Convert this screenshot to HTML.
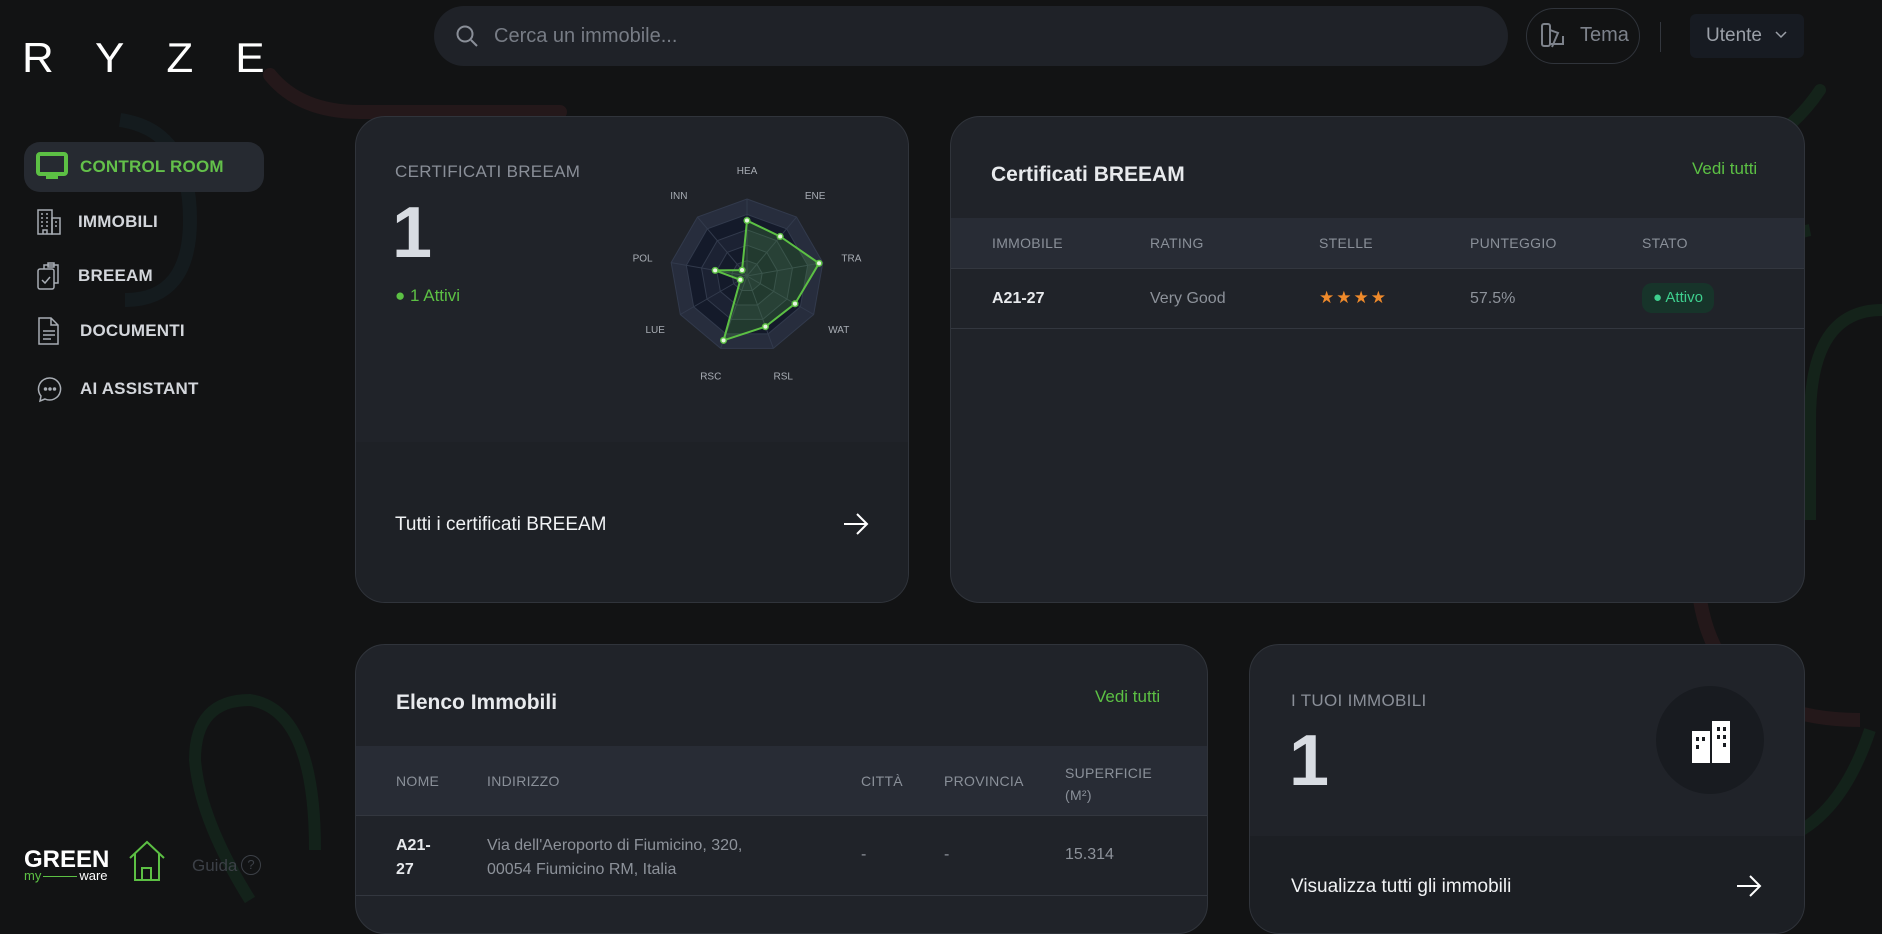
<!DOCTYPE html>
<html><head><meta charset="utf-8"><style>
*{box-sizing:border-box;margin:0;padding:0}
body{width:1882px;height:912px;overflow:hidden;background:#121314;font-family:"Liberation Sans",sans-serif;color:#e6e8eb;position:relative}
.abs{position:absolute}
.card{position:absolute;background:#202329;border:1px solid #30343b;border-radius:30px;overflow:hidden}
.nav{position:absolute;left:24px;width:240px;height:50px;display:flex;align-items:center;font-size:17px;font-weight:bold;color:#d3d6db;letter-spacing:.2px}
.nav svg{position:absolute;left:12px}
.nav span{position:absolute;left:56px}
.th{position:absolute;font-size:14px;color:#8a9099;letter-spacing:.3px}
.td{position:absolute;font-size:16px;color:#8d929a}
</style></head><body>
<svg class="abs" style="left:0;top:0" width="1882" height="912">
<path d="M270 75 Q300 112 360 112 L560 112" stroke="#24181a" stroke-width="14" fill="none" stroke-linecap="round"/>
<path d="M120 120 Q190 130 190 220 Q190 300 125 300" stroke="#141b1e" stroke-width="14" fill="none"/>
<path d="M1820 90 Q1800 120 1770 140" stroke="#14231a" stroke-width="12" fill="none" stroke-linecap="round"/>
<path d="M1810 230 Q1760 240 1760 320" stroke="#14231a" stroke-width="12" fill="none"/>
<path d="M1882 310 Q1810 310 1810 420 L1810 520" stroke="#14231a" stroke-width="12" fill="none"/>
<path d="M1700 600 Q1720 720 1860 720" stroke="#24181a" stroke-width="14" fill="none"/>
<path d="M1870 730 Q1840 820 1780 840" stroke="#13221a" stroke-width="12" fill="none"/>
<path d="M250 900 Q200 820 195 760 Q195 700 250 700 Q315 710 315 850" stroke="#13221a" stroke-width="12" fill="none"/>
</svg>
<div class="abs" style="left:22px;top:38px;font-size:44px;letter-spacing:42px;color:#fff;line-height:1;transform:scaleY(.95);transform-origin:top left">RYZE</div>
<div class="abs" style="left:434px;top:6px;width:1074px;height:60px;border-radius:30px;background:#1f2228"></div>
<svg class="abs" style="left:455px;top:24px" width="24" height="24" viewBox="0 0 24 24" fill="none" stroke="#8a8f98" stroke-width="2"><circle cx="10" cy="10" r="7.5"/><path d="M16 16l6 6"/></svg>
<div class="abs" style="left:494px;top:25px;font-size:20px;color:#777c85">Cerca un immobile...</div>
<div class="abs" style="left:1526px;top:8px;width:114px;height:56px;border:1px solid #30343b;border-radius:28px"></div>
<svg class="abs" style="left:1540px;top:22px" width="26" height="28" viewBox="0 0 26 28" fill="none" stroke="#7d828b" stroke-width="2"><rect x="2" y="2" width="8" height="22" rx="2"/><path d="M10 8l8 3-6 14M10 22h13v-8"/></svg>
<div class="abs" style="left:1580px;top:24px;font-size:20px;color:#7d828b">Tema</div>
<div class="abs" style="left:1660px;top:22px;width:1px;height:30px;background:#33373e"></div>
<div class="abs" style="left:1690px;top:14px;width:114px;height:44px;background:#171b22;border-radius:6px"></div>
<div class="abs" style="left:1706px;top:25px;font-size:19px;color:#9ba0a8">Utente</div>
<svg class="abs" style="left:1774px;top:30px" width="14" height="10" viewBox="0 0 14 10" fill="none" stroke="#9ba0a8" stroke-width="1.5"><path d="M2 2l5 5 5-5"/></svg>
<div class="nav" style="top:142px;background:#262a31;border-radius:16px;color:#63c04a"><svg width="34" height="30" viewBox="0 0 34 30"><rect x="2" y="2" width="28" height="20" rx="2" fill="none" stroke="#5cc044" stroke-width="4"/><rect x="10" y="23" width="12" height="4" fill="#5cc044"/></svg><span style="left:56px">CONTROL ROOM</span></div>
<div class="nav" style="top:197px"><svg width="26" height="28" viewBox="0 0 26 28" fill="none" stroke="#a8adb4" stroke-width="1.5"><rect x="2" y="2" width="14" height="24"/><rect x="16" y="10" width="8" height="16"/><path d="M5 6h2M10 6h2M5 10h2M10 10h2M5 14h2M10 14h2M5 18h2M10 18h2M7 26v-4h4v4M19 14h2M19 18h2"/></svg><span style="left:54px">IMMOBILI</span></div>
<div class="nav" style="top:251px"><svg width="26" height="30" viewBox="0 0 26 30" fill="none" stroke="#a8adb4" stroke-width="1.5"><rect x="2" y="8" width="16" height="20" rx="2"/><path d="M8 8V4h14v18h-4M12 2h6v4h-6zM6 19l3 3 5-6"/></svg><span style="left:54px">BREEAM</span></div>
<div class="nav" style="top:306px"><svg width="26" height="30" viewBox="0 0 26 30" fill="none" stroke="#a8adb4" stroke-width="1.5"><path d="M3 2h12l7 7v19H3z M15 2v7h7M7 15h12M7 19h12M7 23h8"/></svg><span style="left:56px">DOCUMENTI</span></div>
<div class="nav" style="top:364px"><svg width="28" height="28" viewBox="0 0 28 28" fill="none" stroke="#a8adb4" stroke-width="1.5"><path d="M14 3a11 11 0 1 1-5 21l-5 2 1-5A11 11 0 0 1 14 3z"/><circle cx="9.5" cy="14" r="1" fill="#a8adb4"/><circle cx="14" cy="14" r="1" fill="#a8adb4"/><circle cx="18.5" cy="14" r="1" fill="#a8adb4"/></svg><span style="left:56px">AI ASSISTANT</span></div>
<div class="abs" style="left:24px;top:846px;font-size:24px;font-weight:bold;color:#fff;letter-spacing:0">GREEN</div>
<div class="abs" style="left:24px;top:868px;font-size:13px;color:#5cc044">my<span style="display:inline-block;width:34px;height:1px;background:#5cc044;vertical-align:middle;margin:0 2px"></span><span style="color:#fff">ware</span></div>
<svg class="abs" style="left:128px;top:840px" width="38" height="42" viewBox="0 0 38 42" fill="none" stroke="#5cc044" stroke-width="2"><path d="M2 18L19 2l17 16M7 14v26h24V14M14 40V28h9v12"/></svg>
<div class="abs" style="left:192px;top:856px;font-size:17px;color:#3c4047">Guida</div>
<div class="abs" style="left:241px;top:855px;width:20px;height:20px;border:1.5px solid #3c4047;border-radius:50%;font-size:13px;color:#3c4047;text-align:center;line-height:18px">?</div>

<div class="card" style="left:355px;top:116px;width:554px;height:487px">
<div class="abs" style="left:0;top:325px;width:554px;height:162px;background:#1e2126"></div>
<div class="abs" style="left:39px;top:45px;font-size:17px;color:#8a8f98;letter-spacing:.3px">CERTIFICATI BREEAM</div>
<div class="abs" style="left:36px;top:80px;font-size:72px;color:#d8dce2;font-weight:bold;line-height:1">1</div>
<div class="abs" style="left:39px;top:169px;font-size:17px;color:#5cc044">● 1 Attivi</div>
<div class="abs" style="left:39px;top:397px;font-size:19px;color:#f0f2f4">Tutti i certificati BREEAM</div>
<svg class="abs" style="left:486px;top:395px" width="28" height="24" viewBox="0 0 28 24" fill="none" stroke="#fff" stroke-width="2"><path d="M2 12h23M15 2l10 10-10 10"/></svg>
<svg class="abs" style="left:271px;top:39px" width="240" height="240" viewBox="-120 -120 240 240" id="radar"></svg>
</div>
<div class="card" style="left:950px;top:116px;width:855px;height:487px">
<div class="abs" style="left:40px;top:46px;font-size:21px;font-weight:bold;color:#e8eaed">Certificati BREEAM</div>
<div class="abs" style="left:741px;top:42px;font-size:17px;color:#5cc044">Vedi tutti</div>
<div class="abs" style="left:0;top:101px;width:855px;height:51px;background:#282c35;border-bottom:1px solid #33373f"></div>
<div class="th" style="left:41px;top:118px">IMMOBILE</div>
<div class="th" style="left:199px;top:118px">RATING</div>
<div class="th" style="left:368px;top:118px">STELLE</div>
<div class="th" style="left:519px;top:118px">PUNTEGGIO</div>
<div class="th" style="left:691px;top:118px">STATO</div>
<div class="td" style="left:41px;top:173px;color:#e8eaed;font-weight:bold">A21-27</div>
<div class="td" style="left:199px;top:173px">Very Good</div>
<div class="td" style="left:368px;top:171px;color:#ef8a2b;letter-spacing:2px;font-size:17px">★★★★</div>
<div class="td" style="left:519px;top:173px">57.5%</div>
<div class="abs" style="left:691px;top:166px;width:72px;height:30px;background:#17342a;border-radius:10px;font-size:15px;color:#3ecf8e;text-align:center;line-height:30px">● Attivo</div>
<div class="abs" style="left:0;top:211px;width:855px;height:1px;background:#33373f"></div>
</div>
<div class="card" style="left:355px;top:644px;width:853px;height:290px">
<div class="abs" style="left:40px;top:46px;font-size:21px;font-weight:bold;color:#e8eaed">Elenco Immobili</div>
<div class="abs" style="left:739px;top:42px;font-size:17px;color:#5cc044">Vedi tutti</div>
<div class="abs" style="left:0;top:101px;width:853px;height:70px;background:#282c35;border-bottom:1px solid #33373f"></div>
<div class="th" style="left:40px;top:128px">NOME</div>
<div class="th" style="left:131px;top:128px">INDIRIZZO</div>
<div class="th" style="left:505px;top:128px">CITTÀ</div>
<div class="th" style="left:588px;top:128px">PROVINCIA</div>
<div class="th" style="left:709px;top:117px;line-height:22px">SUPERFICIE<br>(M²)</div>
<div class="td" style="left:40px;top:189px;color:#e8eaed;font-weight:bold;line-height:24px">A21-<br>27</div>
<div class="td" style="left:131px;top:189px;line-height:24px">Via dell'Aeroporto di Fiumicino, 320,<br>00054 Fiumicino RM, Italia</div>
<div class="td" style="left:505px;top:201px">-</div>
<div class="td" style="left:588px;top:201px">-</div>
<div class="td" style="left:709px;top:201px">15.314</div>
<div class="abs" style="left:0;top:250px;width:853px;height:1px;background:#33373f"></div>
</div>
<div class="card" style="left:1249px;top:644px;width:556px;height:290px">
<div class="abs" style="left:0;top:191px;width:556px;height:120px;background:#1c1f24"></div>
<div class="abs" style="left:41px;top:46px;font-size:17px;color:#8a8f98;letter-spacing:.3px">I TUOI IMMOBILI</div>
<div class="abs" style="left:39px;top:80px;font-size:72px;color:#d8dce2;font-weight:bold;line-height:1">1</div>
<div class="abs" style="left:406px;top:41px;width:108px;height:108px;border-radius:50%;background:#181b20"></div>
<svg class="abs" style="left:440px;top:74px" width="42" height="44" viewBox="0 0 42 44"><rect x="2" y="12" width="18" height="32" fill="#fff"/><rect x="22" y="2" width="18" height="42" fill="#fff"/><g fill="#181b20"><rect x="6" y="18" width="3" height="4"/><rect x="12" y="18" width="3" height="4"/><rect x="6" y="26" width="3" height="4"/><rect x="27" y="8" width="3" height="4"/><rect x="33" y="8" width="3" height="4"/><rect x="27" y="16" width="3" height="4"/><rect x="33" y="16" width="3" height="4"/><rect x="33" y="24" width="3" height="4"/></g></svg>
<div class="abs" style="left:41px;top:231px;font-size:19px;color:#f0f2f4">Visualizza tutti gli immobili</div>
<svg class="abs" style="left:485px;top:229px" width="28" height="24" viewBox="0 0 28 24" fill="none" stroke="#fff" stroke-width="2"><path d="M2 12h23M15 2l10 10-10 10"/></svg>
</div>
<script>
(function(){
var s=document.getElementById('radar'),n=9,R=77,labs=['HEA','ENE','TRA','WAT','RSL','RSC','LUE','POL','INN'],vals=[.72,.67,.95,.72,.7,.89,.1,.42,.1];
function pt(i,r){var a=-Math.PI/2+i*2*Math.PI/n;return [r*Math.cos(a),r*Math.sin(a)];}
var h='',fills=['#272d3d','#141a2a','#1c2233','#141a2a','#1c2233'];
for(var k=5;k>=1;k--){var p=[];for(var i=0;i<n;i++)p.push(pt(i,R*k/5).join(','));h+='<polygon points="'+p.join(' ')+'" fill="'+fills[5-k]+'" stroke="#323a4c" stroke-width="1"/>';}
for(var i=0;i<n;i++){var q=pt(i,R);h+='<line x1="0" y1="0" x2="'+q[0]+'" y2="'+q[1]+'" stroke="#323a4c"/>';}
var d=[];for(var i=0;i<n;i++)d.push(pt(i,R*vals[i]).join(','));
h+='<polygon points="'+d.join(' ')+'" fill="rgba(92,192,68,0.2)" stroke="#5cc044" stroke-width="2"/>';
for(var i=0;i<n;i++){var q=pt(i,R*vals[i]);h+='<circle cx="'+q[0]+'" cy="'+q[1]+'" r="2.8" fill="#e8f5e3" stroke="#5cc044" stroke-width="1.5"/>';}
for(var i=0;i<n;i++){var q=pt(i,R+29);h+='<text x="'+q[0]+'" y="'+(q[1]+4)+'" fill="#a8adb4" font-size="10" text-anchor="middle" font-family="Liberation Sans">'+labs[i]+'</text>';}
s.innerHTML=h;})();
</script>
</body></html>
